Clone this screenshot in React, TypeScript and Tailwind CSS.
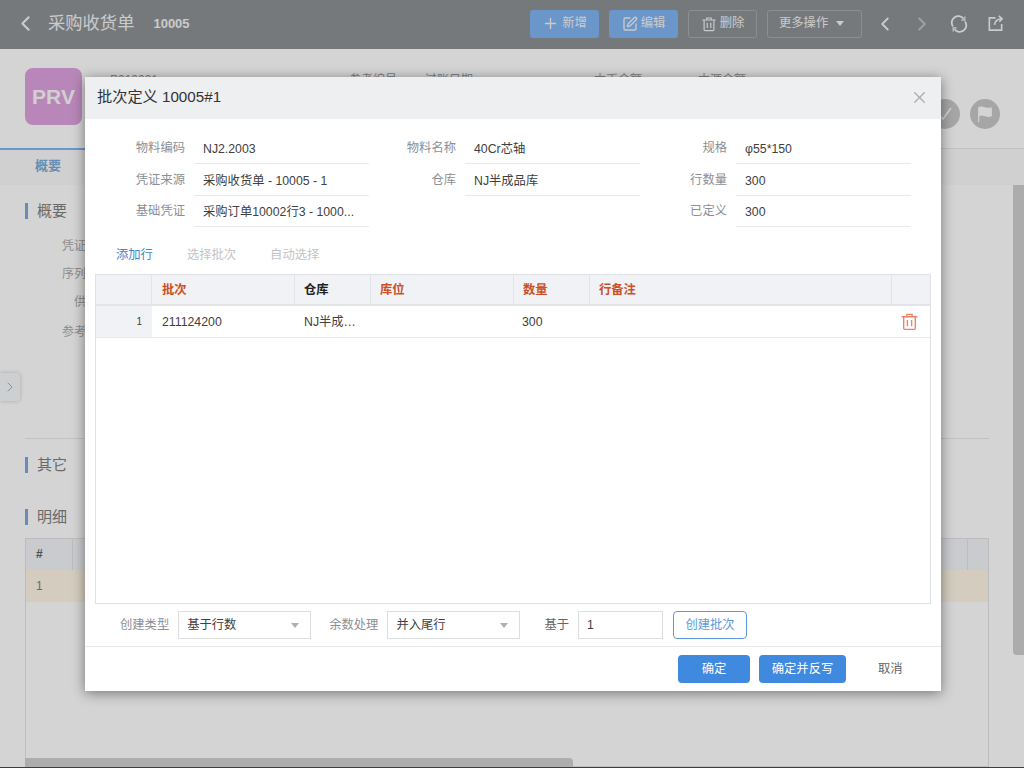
import { ChevronLeft, ChevronRight, Plus, SquarePen, X } from "lucide-react";

const font = "[font-family:'Liberation_Sans','Noto_Sans_CJK_SC',sans-serif]";

function TrashIcon({ className }: { className?: string }) {
  return (
    <svg viewBox="0 0 18 18" fill="none" stroke="currentColor" strokeWidth="1.3" className={className}>
      <path d="M1.5 4.5h15M6.5 4.5V2.2h5v2.3M3.5 4.5v11a1 1 0 0 0 1 1h9a1 1 0 0 0 1-1v-11M7 7.5v6M11 7.5v6" />
    </svg>
  );
}

function RefreshIcon({ className }: { className?: string }) {
  return (
    <svg viewBox="0 0 18 18" fill="none" stroke="currentColor" strokeWidth="1.8" className={className}>
      <path d="M3 11.5A6.5 6.5 0 0 1 13.5 3.8M15 6.5A6.5 6.5 0 0 1 4.5 14.2" />
      <path d="M14.8 1.5v3.6h-3.4M3.2 16.5v-3.6h3.4" strokeWidth="1.2" />
    </svg>
  );
}

function ShareIcon({ className }: { className?: string }) {
  return (
    <svg viewBox="0 0 18 18" fill="none" stroke="currentColor" strokeWidth="1.7" className={className}>
      <path d="M9 3H2.5v13h13V9.5" />
      <path d="M8 10.5c.3-3.5 2.5-6 7-6.5M12.5 1l3.5 3-3 3.2" />
    </svg>
  );
}

function Caret({ className }: { className?: string }) {
  return (
    <svg viewBox="0 0 8 5" className={className} fill="currentColor">
      <path d="M0 0h8L4 5z" />
    </svg>
  );
}

function Field({ label, value }: { label: string; value?: string }) {
  return (
    <div className="flex items-start">
      <span className="w-[86px] pt-[7px] text-right text-[12.3px] leading-[16px] text-[#8b9096]">{label}</span>
      {value !== undefined && (
        <span className="ml-[9px] h-[31px] w-[175px] truncate border-b border-[#e8e9eb] pl-[9px] pt-[8px] text-[12.3px] leading-[16px] text-[#404040]">
          {value}
        </span>
      )}
    </div>
  );
}

function Select({ value }: { value: string }) {
  return (
    <div className="flex h-[28px] w-[133px] items-center justify-between border border-[#dcdee0] pl-[8px] pr-[11px] text-[12.3px] text-[#404040]">
      {value}
      <Caret className="w-[8px] text-[#aeb1b4]" />
    </div>
  );
}

const columns = [
  { title: "批次", w: "w-[143px] pl-[10px]", red: true },
  { title: "仓库", w: "w-[76px] pl-[9px]", red: false },
  { title: "库位", w: "w-[143px] pl-[9px]", red: true },
  { title: "数量", w: "w-[76px] pl-[9px]", red: true },
  { title: "行备注", w: "w-[302px] pl-[9px]", red: true },
];

function Background() {
  return (
    <div className="flex h-full flex-col">
      <header className="flex h-[49px] shrink-0 items-center bg-[#8e9295] pb-[2px] text-[#f4f4f4]">
        <ChevronLeft className="ml-[13px] size-[25px]" strokeWidth={2} />
        <span className="ml-[10px] text-[17.3px]">采购收货单</span>
        <span className="ml-[19px] text-[13px] font-bold">10005</span>
        <div className="ml-auto flex items-center text-[12.3px]">
          <button className="flex h-[28px] w-[69px] items-center justify-center gap-[3px] rounded-[3px] bg-[#80b5f3]">
            <Plus className="size-[17px]" /> 新增
          </button>
          <button className="ml-[10px] flex h-[28px] w-[69px] items-center justify-center gap-[3px] rounded-[3px] bg-[#80b5f3]">
            <SquarePen className="size-[16px]" /> 编辑
          </button>
          <button className="ml-[10px] flex h-[28px] w-[69px] items-center justify-center gap-[3px] rounded-[3px] border border-[#a9acaf]">
            <TrashIcon className="size-[16px]" /> 删除
          </button>
          <button className="ml-[10px] flex h-[28px] w-[95px] items-center gap-[8px] rounded-[3px] border border-[#a9acaf] pl-[11px]">
            更多操作 <Caret className="w-[8px]" />
          </button>
          <ChevronLeft className="ml-[12px] size-[22px]" />
          <ChevronRight className="ml-[15px] size-[22px] opacity-50" />
          <RefreshIcon className="ml-[17px] size-[18px]" />
          <ShareIcon className="ml-[19px] mr-[20px] size-[17px]" />
        </div>
      </header>

      <div className="flex h-[99px] shrink-0 pl-[25px] pr-[24px] pt-[19px]">
        <div className="flex size-[57px] items-center justify-center rounded-[8px] bg-[#dfa2df] text-[21px] font-bold text-[#fafafa]">
          PRV
        </div>
        <div className="ml-[28px] mt-[3px] flex text-[12px] text-[#9a9a9a]">
          <span className="w-[239px]">P010001</span>
          <span className="w-[76px]">参考编号</span>
          <span className="w-[169px]">过账日期</span>
          <span className="w-[104px]">本币金额</span>
          <span>本源金额</span>
        </div>
        <div className="ml-auto mt-[31px] flex gap-[10px] text-white">
          <div className="flex size-[30px] items-center justify-center rounded-full bg-[#c8c8c8]">
            <svg viewBox="0 0 14 14" className="size-[14px]" fill="none" stroke="currentColor" strokeWidth="1.5">
              <path d="M1 8l4 4 8-11" />
            </svg>
          </div>
          <div className="flex size-[30px] items-center justify-center rounded-full bg-[#c8c8c8]">
            <svg viewBox="0 0 14 14" className="size-[16px]" fill="currentColor">
              <path d="M1 1c2-.8 3.500-.8 6 0s4 .8 6 0v8c-2 .8-3.500.8-6 0s-3.500-.8-5 0V14H1z" />
            </svg>
          </div>
        </div>
      </div>

      <div className="flex h-[37px] shrink-0 border-t border-[#e8e8e8] bg-[#fafafa]">
        <div className="-mt-px h-[38px] w-[96px] border-t-2 border-[#80b5f3] pt-[6px] text-center text-[13px] font-bold text-[#80a8d8]">
          概要
        </div>
      </div>

      <div className="flex min-h-0 flex-1">
        <main className="relative flex min-w-0 flex-1 flex-col pl-[25px] pr-[24px]">
          <h3 className="mt-[18px] border-l-[3px] border-[#7fa8dc] pl-[9px] text-[15px] leading-[16px] text-[#808080]">概要</h3>
          <div className="mt-[18px] flex flex-col gap-[12px] text-[12px] text-[#aaa]">
            <span className="ml-[37px] h-[16px]">凭证</span>
            <span className="ml-[37px] h-[16px]">序列</span>
            <span className="ml-[49px] h-[16px]">供</span>
            <span className="ml-[37px] mt-[2px] h-[16px]">参考</span>
          </div>
          <div className="mt-[99px] border-t border-[#e8e8e8]" />
          <h3 className="mt-[18px] border-l-[3px] border-[#7fa8dc] pl-[9px] text-[15px] leading-[16px] text-[#808080]">其它</h3>
          <h3 className="mt-[36px] border-l-[3px] border-[#7fa8dc] pl-[9px] text-[15px] leading-[16px] text-[#808080]">明细</h3>
          <div className="mt-[13px] min-h-0 flex-1 border border-[#e4e4e4]">
            <div className="flex h-[31px] items-center bg-[#f2f4f8] text-[12px] font-bold text-[#606060]">
              <span className="w-[47px] border-r border-[#e4e4e4] pl-[10px] leading-[31px]">#</span>
              <span className="flex-1" />
              <span className="h-full w-[21px] border-l border-[#e4e4e4]" />
            </div>
            <div className="flex h-[32px] items-center bg-[#fff6e6] pl-[10px] text-[12px] text-[#808080]">1</div>
          </div>
          <div className="absolute bottom-0 left-[25px] h-[9px] w-[548px] rounded-tr-[4px] bg-[#d0d0d0]" />
          <button className="absolute left-0 top-[188px] flex h-[28px] w-[20px] items-center justify-center rounded-r-[3px] bg-[#f8f9fb] shadow-[0_0_4px_rgba(0,0,0,.2)]">
            <ChevronRight className="size-[16px] text-[#80a8d8]" strokeWidth={1.3} />
          </button>
        </main>
        <div className="h-[470px] w-[11px] shrink-0 rounded-bl-[4px] bg-[#cfcfcf]" />
      </div>
      <div className="h-px shrink-0 bg-[#3a4d60]" />
    </div>
  );
}

function Dialog() {
  return (
    <div className="absolute left-[85px] top-[77px] flex h-[614px] w-[856px] flex-col bg-white shadow-[0_2px_12px_rgba(0,0,0,.45)]">
      <div className="flex h-[42px] shrink-0 items-center justify-between bg-[#eeeff1] px-[12px] pb-[2px]">
        <span className="text-[15.2px] text-[#333]">批次定义 10005#1</span>
        <X className="size-[19px] text-[#a9acaf]" strokeWidth={1.5} />
      </div>

      <div className="mt-[14px] grid grid-cols-[271px_271px_271px] grid-rows-[32px_31px_32px] pl-[14px]">
        <Field label="物料编码" value="NJ2.2003" />
        <Field label="物料名称" value="40Cr芯轴" />
        <Field label="规格" value="φ55*150" />
        <Field label="凭证来源" value="采购收货单 - 10005 - 1" />
        <Field label="仓库" value="NJ半成品库" />
        <Field label="行数量" value="300" />
        <Field label="基础凭证" value="采购订单10002行3 - 1000..." />
        <div />
        <Field label="已定义" value="300" />
      </div>

      <div className="mt-[14px] flex h-[26px] items-center pl-[31px] text-[12.3px]">
        <span className="text-[#3f88c8]">添加行</span>
        <span className="ml-[34px] text-[#c2c4c7]">选择批次</span>
        <span className="ml-[34px] text-[#c2c4c7]">自动选择</span>
      </div>

      <div className="mx-[10px] mt-[6px] flex h-[330px] flex-col border border-[#dfe1e5]">
        <div className="flex h-[31px] shrink-0 border-b-2 border-[#e2e4e8] bg-[#f1f2f6] text-[12.3px] font-bold leading-[30px]">
          <div className="w-[56px] border-r border-[#e2e4e8]" />
          {columns.map((c) => (
            <div
              key={c.title}
              className={`${c.w} border-r border-[#e2e4e8] ${c.red ? "text-[#cc4f25]" : "text-[#222]"}`}
            >
              {c.title}
            </div>
          ))}
          <div className="flex-1" />
        </div>
        <div className="flex h-[32px] shrink-0 border-b border-[#e6e7ea] text-[12.3px] leading-[32px] text-[#404040]">
          <div className="w-[56px] bg-[#f1f2f6] pr-[10px] text-right text-[10px]">1</div>
          <div className="w-[143px] pl-[10px]">211124200</div>
          <div className="w-[76px] truncate pl-[9px]">NJ半成…</div>
          <div className="w-[143px]" />
          <div className="w-[76px] pl-[8px]">300</div>
          <div className="flex flex-1 items-center justify-end pr-[11px]">
            <TrashIcon className="size-[19px] text-[#ee8268]" />
          </div>
        </div>
      </div>

      <div className="mt-[7px] flex h-[28px] shrink-0 items-center text-[12.3px] text-[#8b9096]">
        <span className="ml-[35px]">创建类型</span>
        <div className="ml-[9px]">
          <Select value="基于行数" />
        </div>
        <span className="ml-[18px]">余数处理</span>
        <div className="ml-[9px]">
          <Select value="并入尾行" />
        </div>
        <span className="ml-[24px] text-[#666]">基于</span>
        <div className="ml-[9px] h-[28px] w-[85px] border border-[#dcdee0] pl-[8px] leading-[26px] text-[#404040]">1</div>
        <button className="ml-[10px] h-[28px] w-[74px] rounded-[4px] border border-[#5b9ade] text-[#5b9ade]">创建批次</button>
      </div>

      <div className="mt-[7px] flex flex-1 items-center border-t border-[#e9eaec] text-[12.3px]">
        <button className="ml-[593px] h-[28px] w-[72px] rounded-[4px] bg-[#3f89de] text-white">确定</button>
        <button className="ml-[9px] h-[28px] w-[87px] rounded-[4px] bg-[#3f89de] text-white">确定并反写</button>
        <button className="ml-[32px] text-[#666]">取消</button>
      </div>
    </div>
  );
}

export default function App() {
  return (
    <div className={`${font} relative h-screen overflow-hidden bg-white`}>
      <Background />
      <div className="absolute inset-0 bg-black/[.17]" />
      <Dialog />
    </div>
  );
}
